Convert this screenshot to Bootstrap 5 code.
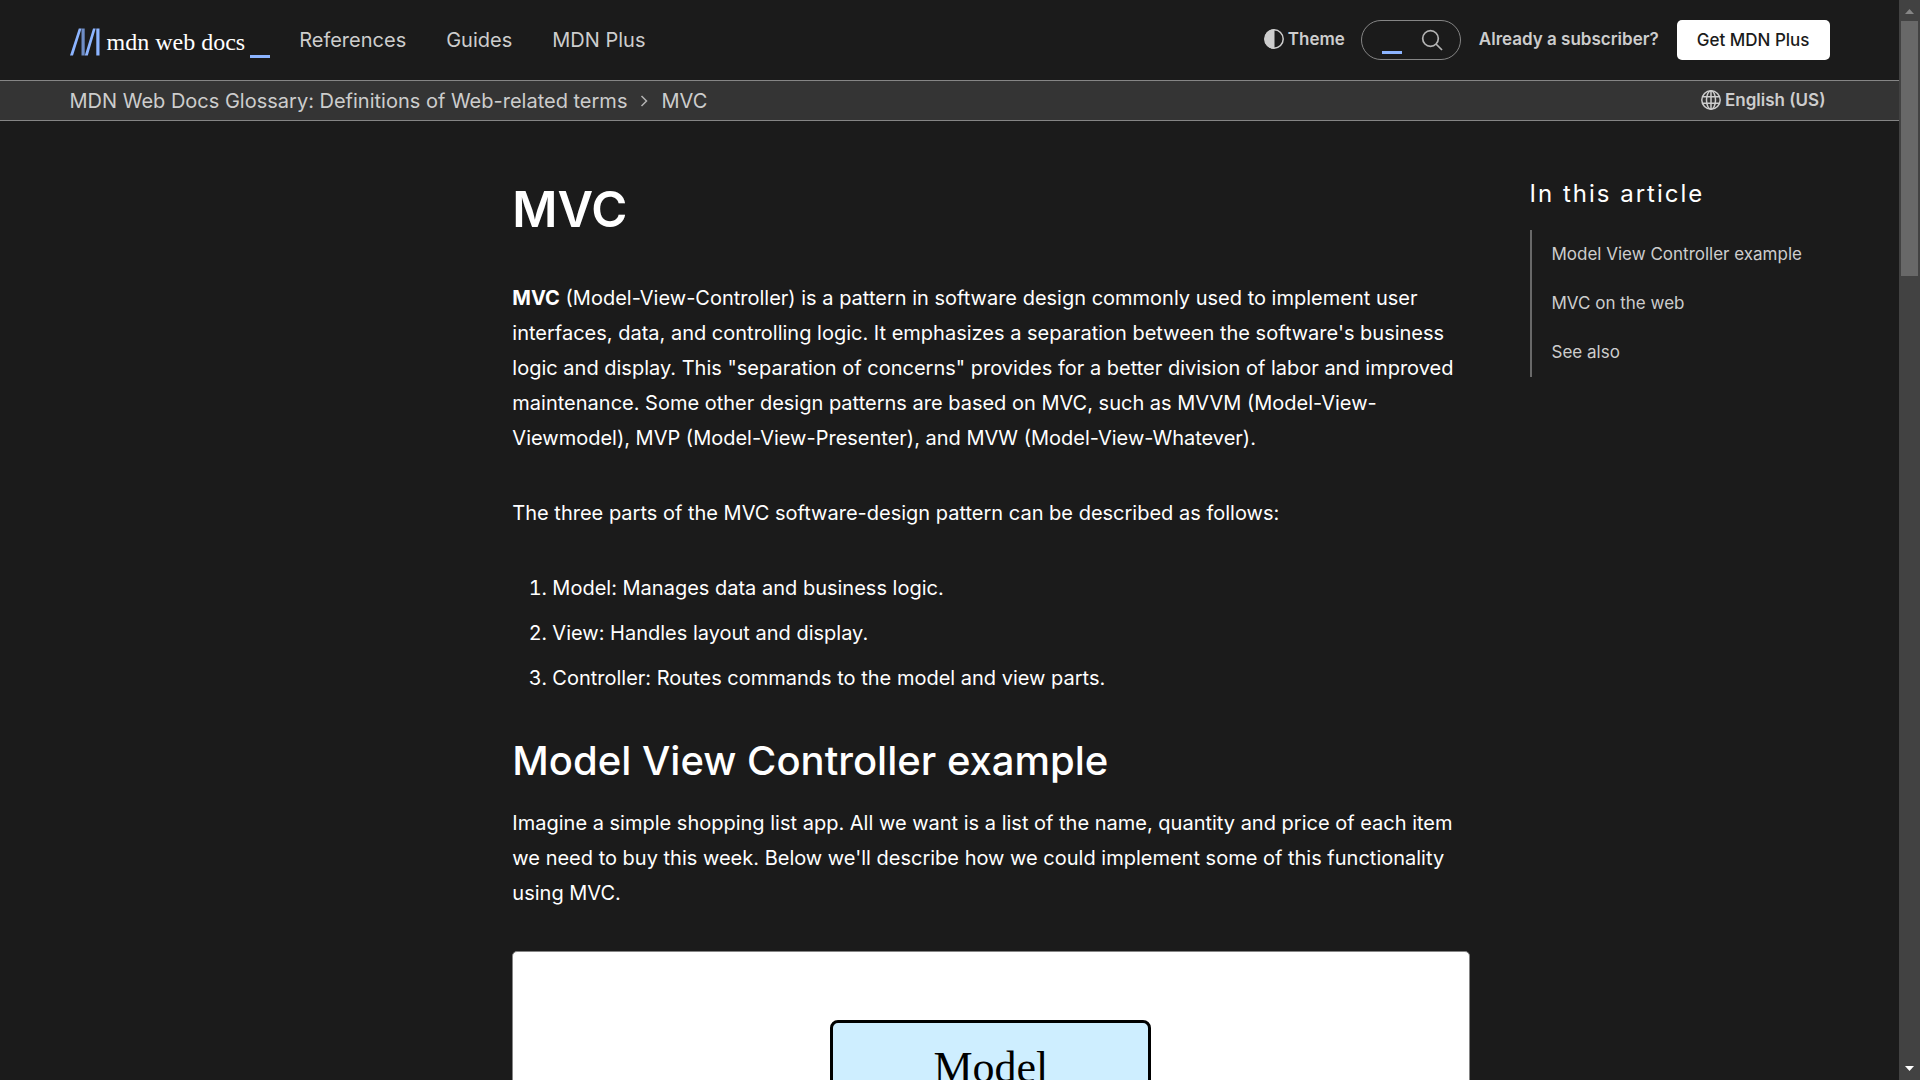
<!DOCTYPE html>
<html lang="en-US" data-bs-theme="dark">
<head>
<meta charset="utf-8">
<meta name="viewport" content="width=device-width, initial-scale=1">
<title>MVC - MDN Web Docs Glossary: Definitions of Web-related terms | MDN</title>
<link href="https://cdn.jsdelivr.net/npm/bootstrap@5.3.0/dist/css/bootstrap.min.css" rel="stylesheet">
<style>
  :root {
    --bg: #1b1b1b;
    --bg-bar: #343434;
    --line: #858585;
    --ink: #ffffff;
    --ink-soft: #cdcdcd;
    --accent: #8cb4ff;
  }
  body {
    background: var(--bg);
    color: var(--ink);
    font-family: Inter, "Liberation Sans", sans-serif;
    font-size: 20px;
    line-height: 35px;
  }
  a { color: var(--ink-soft); text-decoration: none; }
  .wrap { max-width: 1800px; padding: 0 20px; }

  /* header */
  .top-bar { height: 80px; }
  .logo { gap: 7px; margin-right: 9px; padding-top: 3px; color: var(--ink); }
  .logo-word { font: 24px/30px "Liberation Serif", serif; }
  .dash { width: 20px; height: 3px; background: var(--accent); }
  .logo .dash { margin: 30px 0 0 -2px; }
  .top-nav .nav-link { padding: 0 20px; color: var(--ink-soft); line-height: 30px; }
  .tool { padding: 0 0 3px; border: 0; background: none; color: var(--ink-soft); font-size: 17px; font-weight: 600; line-height: 26px; }
  .subscriber { padding: 0 2px 3px; }
  .search-pill { width: 100px; height: 40px; padding: 0 17px 0 20px; border: 1px solid var(--line); border-radius: 20px; }
  .search-pill .tool { padding: 0; }
  .search-pill input { width: 20px; height: 24px; padding: 0; border: 0; border-bottom: 3px solid var(--accent); border-radius: 0; background: none; margin-top: 4px; color: var(--ink); outline: 0; }
  .plus-btn { height: 40px; padding: 0 20px; border-radius: 5px; background: #fff; color: #1b1b1b; font-size: 17px; font-weight: 500; line-height: 40px; }
  .plus-btn:hover { background: var(--ink-soft); color: #1b1b1b; }

  /* breadcrumbs */
  .crumb-bar { background: var(--bg-bar); border: solid var(--line); border-width: 1px 0; height: 41px; }
  .crumbs { gap: 13px; line-height: 40px; }

  /* article */
  .doc-grid { display: grid; grid-template-columns: minmax(0, 2fr) minmax(0, 5fr) 300px; gap: 60px; }
  .doc-body { grid-column: 2; padding-top: 59px; }
  .doc-body h1 { font-size: 49px; font-weight: 600; line-height: 60px; margin: 0 0 41px; }
  .doc-body h2 { font-size: 40px; font-weight: 500; line-height: 50px; margin: 40px 0 20px; }
  .doc-body p { margin: 0 0 40px; }
  .doc-body ol { padding-left: 40px; margin: 0; }
  .doc-body li + li { margin-top: 10px; }
  .figure-box { height: 600px; border: 1px solid var(--line); border-radius: 5px; background: #fff; padding-top: 68px; }
  .node-box { width: 321px; height: 130px; border: 3px solid #000; border-radius: 8px; background: #ceeeff; color: #000; font: 44px/52px "Liberation Serif", serif; padding-top: 19px; }

  /* table of contents */
  .toc { padding-top: 58px; }
  .toc h2 { font-size: 24px; font-weight: 400; line-height: 30px; letter-spacing: 2px; margin: 0 0 21px; }
  .toc ul { border-left: 2px solid #696969; }
  .toc a { display: block; padding: 10px 20px; font-size: 17px; line-height: 29px; }

  /* scroll track */
  .track { width: 21px; background: #424242; padding: 0 2px; }
  .track-thumb { height: 255px; background: #686868; }
</style>
</head>
<body>
<div class="d-flex vh-100 overflow-hidden">
  <div class="flex-grow-1 overflow-hidden">
    <header>
      <div class="wrap top-bar mx-auto d-flex align-items-center">
        <a href="#" class="logo d-flex align-items-center" aria-label="MDN homepage">
          <svg width="30" height="28" viewBox="0 0 30 28" aria-hidden="true">
            <path fill="#8cb4ff" d="M8.800 .5h2.700L3 27.500H0zM23 .5h2.700L17.800 27.500h-3zM26.300 .5h3.200v27h-3.200z"/>
            <path fill="#8cb4ff" opacity=".75" d="M11.500 .5h3.200v27h-3.200z"/>
          </svg>
          <span class="logo-word">mdn web docs</span>
          <span class="dash"></span>
        </a>
        <nav class="top-nav nav flex-nowrap" aria-label="Main">
          <a class="nav-link" href="#">References</a>
          <a class="nav-link" href="#">Guides</a>
          <a class="nav-link" href="#">MDN Plus</a>
        </nav>
        <div class="ms-auto d-flex align-items-center">
          <button type="button" class="tool d-flex align-items-center gap-1 me-3">
            <svg width="20" height="20" viewBox="0 0 20 20" aria-hidden="true">
              <circle cx="10" cy="10" r="9.200" fill="none" stroke="currentColor" stroke-width="1.500"/>
              <path fill="currentColor" d="M10.500 .5v19H10a9.500 9.500 0 0 1 0-19z"/>
            </svg>
            Theme
          </button>
          <form class="search-pill d-flex align-items-center justify-content-between" role="search">
            <input type="text" aria-label="Search">
            <button type="button" class="tool d-flex" aria-label="Run search">
              <svg width="22" height="22" viewBox="0 0 22 22" fill="none" stroke="#b3b3b3" stroke-width="1.700" aria-hidden="true">
                <circle cx="9.500" cy="9.500" r="7.800"/>
                <path d="M15 15l6 6"/>
              </svg>
            </button>
          </form>
          <a href="#" class="tool subscriber mx-3">Already a subscriber?</a>
          <a href="#" class="btn plus-btn border-0">Get MDN Plus</a>
        </div>
      </div>
      <div class="crumb-bar">
        <div class="wrap mx-auto d-flex align-items-center justify-content-between">
          <nav class="crumbs d-flex align-items-center" aria-label="Breadcrumb">
            <a href="#">MDN Web Docs Glossary: Definitions of Web-related terms</a>
            <svg width="8" height="12" viewBox="0 0 8 12" fill="none" stroke="#b3b3b3" stroke-width="1.500" aria-hidden="true"><path d="M1.500 1l5 5-5 5"/></svg>
            <a href="#">MVC</a>
          </nav>
          <button type="button" class="tool d-flex align-items-center gap-1 pe-1">
            <svg width="20" height="20" viewBox="0 0 20 20" fill="none" stroke="currentColor" stroke-width="1.500" aria-hidden="true">
              <circle cx="10" cy="10" r="9.200"/>
              <ellipse cx="10" cy="10" rx="4.500" ry="9.200"/>
              <path d="M10 1v18M1.500 6.800h17M1.500 13.200h17"/>
            </svg>
            English (US)
          </button>
        </div>
      </div>
    </header>

    <div class="wrap doc-grid mx-auto">
      <main class="doc-body">
        <h1>MVC</h1>
        <p><strong class="fw-bold">MVC</strong> (Model-View-Controller) is a pattern in software design commonly used to implement user interfaces, data, and controlling logic. It emphasizes a separation between the software's business logic and display. This "separation of concerns" provides for a better division of labor and improved maintenance. Some other design patterns are based on MVC, such as MVVM (Model-View-Viewmodel), MVP (Model-View-Presenter), and MVW (Model-View-Whatever).</p>
        <p>The three parts of the MVC software-design pattern can be described as follows:</p>
        <ol>
          <li>Model: Manages data and business logic.</li>
          <li>View: Handles layout and display.</li>
          <li>Controller: Routes commands to the model and view parts.</li>
        </ol>
        <h2>Model View Controller example</h2>
        <p>Imagine a simple shopping list app. All we want is a list of the name, quantity and price of each item we need to buy this week. Below we'll describe how we could implement some of this functionality using MVC.</p>
        <div class="figure-box">
          <div class="node-box mx-auto text-center">Model</div>
        </div>
      </main>
      <aside class="toc">
        <h2>In this article</h2>
        <ul class="list-unstyled mb-0">
          <li><a href="#">Model View Controller example</a></li>
          <li><a href="#">MVC on the web</a></li>
          <li><a href="#">See also</a></li>
        </ul>
      </aside>
    </div>
  </div>

  <div class="track d-flex flex-column flex-shrink-0" aria-hidden="true">
    <svg class="d-block" width="17" height="21" viewBox="0 0 17 21"><path fill="#868686" d="M4 14l4.500-5 4.500 5z"/></svg>
    <div class="track-thumb"></div>
    <svg class="d-block mt-auto" width="17" height="21" viewBox="0 0 17 21"><path fill="#fff" d="M4 7l4.500 5 4.500-5z"/></svg>
  </div>
</div>
<script src="https://cdn.jsdelivr.net/npm/bootstrap@5.3.0/dist/js/bootstrap.bundle.min.js"></script>
</body>
</html>
